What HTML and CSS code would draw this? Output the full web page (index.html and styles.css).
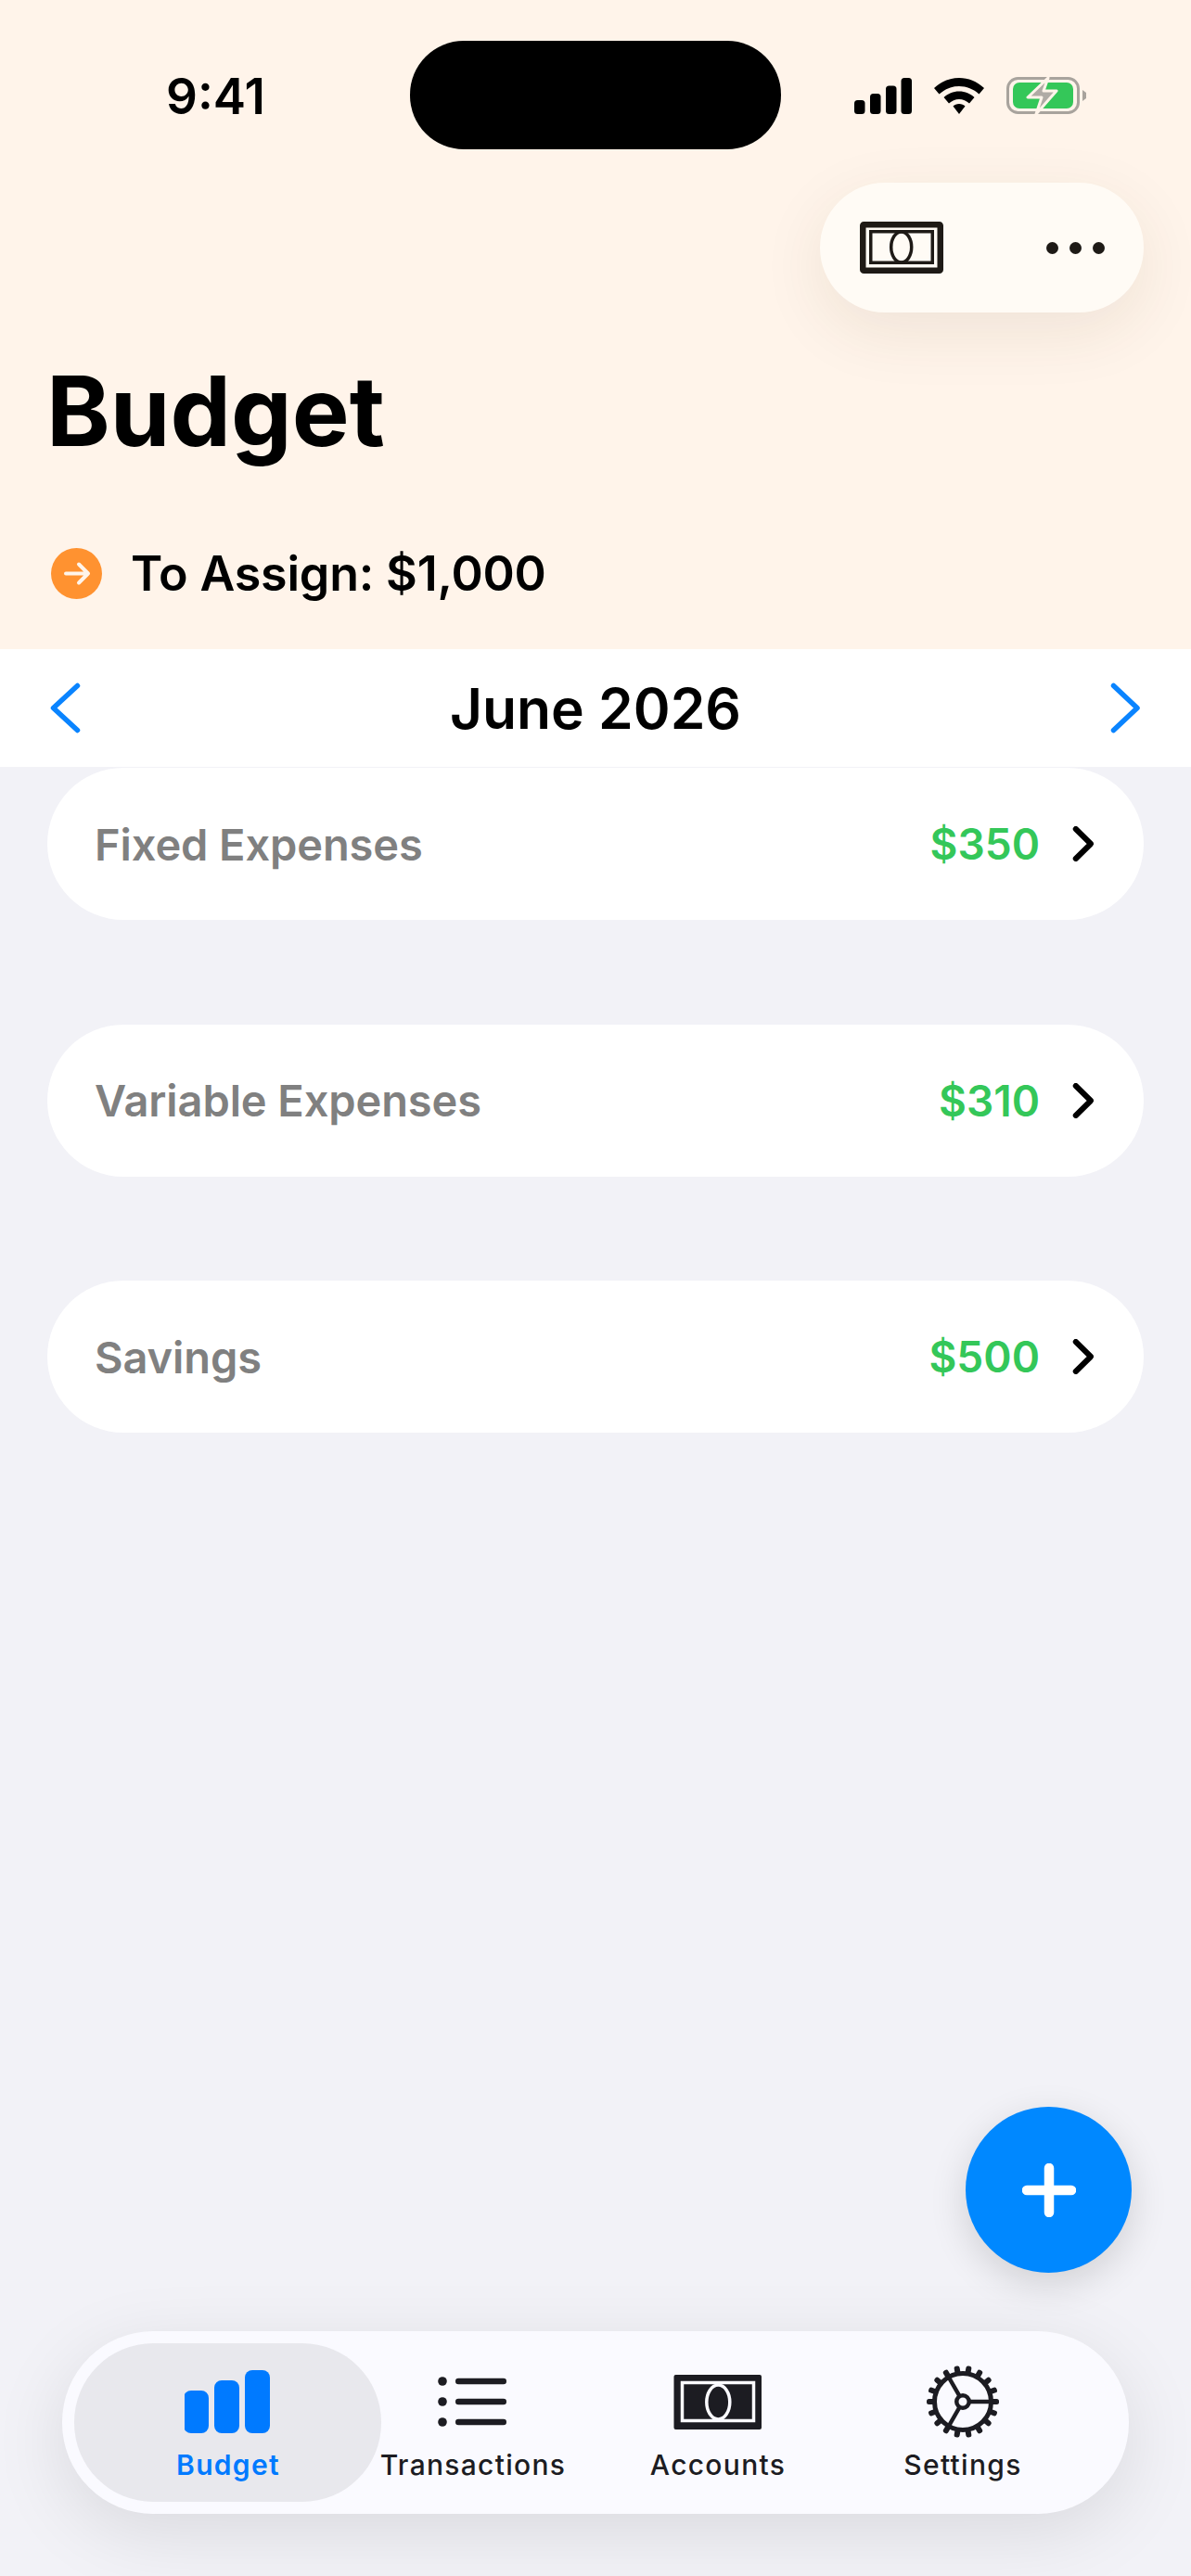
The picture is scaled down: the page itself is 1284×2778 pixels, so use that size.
FILE: index.html
```html
<!DOCTYPE html>
<html lang="en">
<head>
    <meta charset="UTF-8">
    <meta name="viewport" content="width=device-width, initial-scale=1.0">
    <title>Budget</title>
    <link rel="stylesheet" href="styles.css">
</head>
<body>
    <div class="screen">
        <div class="island"></div>

        <header class="top">
            <div class="status-bar">
                <span class="time">9:41</span>
                <div class="status-icons">
                    <svg class="signal" width="62" height="39" viewBox="0 0 62 39">
                        <rect x="0" y="24" width="11.5" height="15" rx="3.5"/>
                        <rect x="17" y="17" width="11.5" height="22" rx="3.5"/>
                        <rect x="34" y="8.5" width="11.5" height="30.5" rx="3.5"/>
                        <rect x="50.5" y="0" width="11.5" height="39" rx="3.5"/>
                    </svg>
                    <svg class="wifi" width="54" height="39" viewBox="0 0 54 39">
                        <path d="M27 0C17 0 8 3.800 0 11L5.500 17.500C11.500 12 19 9 27 9C35 9 42.500 12 48.500 17.500L54 11C46 3.800 37 0 27 0Z"/>
                        <path d="M27 14.500C20.500 14.500 15 17 10.500 21L16 27.500C19 24.800 23 23 27 23C31 23 35 24.800 38 27.500L43.500 21C39 17 33.500 14.500 27 14.500Z"/>
                        <path d="M27 28C24.300 28 22 29 20.500 30.500L27 39L33.500 30.500C32 29 29.700 28 27 28Z"/>
                    </svg>
                    <svg class="battery" width="86" height="42" viewBox="0 0 86 42">
                        <rect x="1.500" y="1.500" width="76" height="37" rx="11" fill="none" stroke="#a8a39d" stroke-width="3"/>
                        <rect x="7" y="6" width="65" height="28" rx="7" fill="#34c759"/>
                        <path d="M45 1L23 22H38L32 40L54 15H40Z" fill="#b0aba5" stroke="#fff4ea" stroke-width="3" stroke-linejoin="round"/>
                        <path d="M82 14L86 17V23L82 26Z" fill="#a8a39d"/>
                    </svg>
                </div>
            </div>

            <div class="toolbar-row">
                <div class="toolbar">
                    <svg width="90" height="56" viewBox="0 0 90 56">
                        <rect x="3.250" y="3.250" width="83.500" height="49.500" rx="1" fill="none" stroke="#1e1a16" stroke-width="6.500"/>
                        <rect x="11.750" y="10.750" width="66.500" height="33.500" fill="none" stroke="#1e1a16" stroke-width="3.500"/>
                        <ellipse cx="44.700" cy="27.500" rx="11" ry="16.500" fill="none" stroke="#1e1a16" stroke-width="3.500"/>
                    </svg>
                    <div class="more-dots"><i></i><i></i><i></i></div>
                </div>
            </div>

            <h1 class="page-title">Budget</h1>

            <div class="assign">
                <svg width="55" height="55" viewBox="0 0 55 55">
                    <circle cx="27.500" cy="27.500" r="27.500" fill="#ff9230"/>
                    <path d="M16 27.500H40M30 17.500L40 27.500L30 37.500" fill="none" stroke="#fff" stroke-opacity="0.9" stroke-width="4" stroke-linecap="round" stroke-linejoin="round"/>
                </svg>
                <span>To Assign: $1,000</span>
            </div>
        </header>

        <div class="month-bar">
            <svg width="36" height="56" viewBox="0 0 36 56"><path d="M32.500 3.500L6.500 27.500L32.500 51.500" class="nav-arrow"/></svg>
            <span class="month-name">June 2026</span>
            <svg width="36" height="56" viewBox="0 0 36 56"><path d="M6.500 3.500L32 27.500L6.500 51.500" class="nav-arrow"/></svg>
        </div>

        <main class="groups">
            <div class="group-card">
                <span class="group-name">Fixed Expenses</span>
                <span class="group-amount">$350</span>
                <svg class="chevron" width="24" height="38" viewBox="0 0 24 38"><path d="M4.750 3L21 19L4.750 35"/></svg>
            </div>
            <div class="group-card">
                <span class="group-name">Variable Expenses</span>
                <span class="group-amount">$310</span>
                <svg class="chevron" width="24" height="38" viewBox="0 0 24 38"><path d="M4.750 3L21 19L4.750 35"/></svg>
            </div>
            <div class="group-card">
                <span class="group-name">Savings</span>
                <span class="group-amount">$500</span>
                <svg class="chevron" width="24" height="38" viewBox="0 0 24 38"><path d="M4.750 3L21 19L4.750 35"/></svg>
            </div>
        </main>

        <button class="fab">
            <svg width="58" height="58" viewBox="0 0 58 58"><path d="M29 5V53M5 29H53" fill="none" stroke="#fff" stroke-width="10.500" stroke-linecap="round"/></svg>
        </button>

        <nav class="tab-bar">
            <div class="tab tab-active">
                <svg width="94" height="70" viewBox="1 0 94 70" fill="#007aff">
                    <rect x="0" y="24" width="27" height="46" rx="8"/>
                    <rect x="33" y="13" width="27" height="57" rx="8"/>
                    <rect x="66" y="2" width="27" height="68" rx="8"/>
                </svg>
                <span>Budget</span>
            </div>
            <div class="tab">
                <svg width="78" height="70" viewBox="0 0 78 70" fill="#1c1c22">
                    <circle cx="6" cy="14" r="4.800"/>
                    <circle cx="6" cy="36" r="4.800"/>
                    <circle cx="6" cy="58" r="4.800"/>
                    <rect x="20" y="10.750" width="55" height="6.500" rx="3.250"/>
                    <rect x="20" y="32.750" width="55" height="6.500" rx="3.250"/>
                    <rect x="20" y="54.750" width="55" height="6.500" rx="3.250"/>
                </svg>
                <span>Transactions</span>
            </div>
            <div class="tab">
                <svg width="96" height="70" viewBox="0 0 96 70">
                    <rect x="0.500" y="7" width="94.500" height="59" rx="2" fill="#1c1c22"/>
                    <rect x="9.500" y="15.500" width="77" height="41" fill="none" stroke="#fafaff" stroke-width="3.500"/>
                    <ellipse cx="48.300" cy="36.500" rx="12.500" ry="18.500" fill="none" stroke="#fafaff" stroke-width="3.500"/>
                </svg>
                <span>Accounts</span>
            </div>
            <div class="tab">
                <svg width="80" height="80" viewBox="-40 -40 80 80" class="gear">
                    <g fill="#1c1c22">
                        <rect x="-3" y="-39" width="6" height="10" rx="2.500" transform="rotate(10)"/>
                        <rect x="-3" y="-39" width="6" height="10" rx="2.500" transform="rotate(30)"/>
                        <rect x="-3" y="-39" width="6" height="10" rx="2.500" transform="rotate(50)"/>
                        <rect x="-3" y="-39" width="6" height="10" rx="2.500" transform="rotate(70)"/>
                        <rect x="-3" y="-39" width="6" height="10" rx="2.500" transform="rotate(90)"/>
                        <rect x="-3" y="-39" width="6" height="10" rx="2.500" transform="rotate(110)"/>
                        <rect x="-3" y="-39" width="6" height="10" rx="2.500" transform="rotate(130)"/>
                        <rect x="-3" y="-39" width="6" height="10" rx="2.500" transform="rotate(150)"/>
                        <rect x="-3" y="-39" width="6" height="10" rx="2.500" transform="rotate(170)"/>
                        <rect x="-3" y="-39" width="6" height="10" rx="2.500" transform="rotate(190)"/>
                        <rect x="-3" y="-39" width="6" height="10" rx="2.500" transform="rotate(210)"/>
                        <rect x="-3" y="-39" width="6" height="10" rx="2.500" transform="rotate(230)"/>
                        <rect x="-3" y="-39" width="6" height="10" rx="2.500" transform="rotate(250)"/>
                        <rect x="-3" y="-39" width="6" height="10" rx="2.500" transform="rotate(270)"/>
                        <rect x="-3" y="-39" width="6" height="10" rx="2.500" transform="rotate(290)"/>
                        <rect x="-3" y="-39" width="6" height="10" rx="2.500" transform="rotate(310)"/>
                        <rect x="-3" y="-39" width="6" height="10" rx="2.500" transform="rotate(330)"/>
                        <rect x="-3" y="-39" width="6" height="10" rx="2.500" transform="rotate(350)"/>
                    </g>
                    <circle r="30.500" fill="none" stroke="#1c1c22" stroke-width="5"/>
                    <path d="M7 0H30M-3.500 -6L-15 -26M-3.500 6L-15 26" fill="none" stroke="#1c1c22" stroke-width="4.500"/>
                    <circle r="6.750" fill="none" stroke="#1c1c22" stroke-width="4.500"/>
                </svg>
                <span>Settings</span>
            </div>
        </nav>
    </div>
</body>
</html>
```

FILE: styles.css
```css
* {
    margin: 0;
    padding: 0;
    box-sizing: border-box;
    font-family: Inter, 'Noto Sans', sans-serif;
}

body {
    background: #f2f2f7;
}

.screen {
    position: relative;
    width: 1284px;
    height: 2778px;
    overflow: hidden;
    background: #f2f2f7;
}

.island {
    position: absolute;
    top: 44px;
    left: 442px;
    width: 400px;
    height: 117px;
    background: #000;
    border-radius: 58px;
}

/* Header */
.top {
    height: 700px;
    background: #fff4ea;
    padding: 0 51px 0 55px;
}

.status-bar {
    display: flex;
    justify-content: space-between;
    height: 197px;
    padding: 84px 0 0 124px;
}

.time {
    margin-top: 1px;
    font-size: 53px;
    font-weight: 600;
    line-height: 39px;
    color: #000;
}

.status-icons {
    display: flex;
    align-items: flex-start;
    gap: 24px;
    margin-right: 62px;
}

.battery {
    margin-top: -1px;
}

.toolbar-row {
    display: flex;
    justify-content: flex-end;
}

.toolbar {
    display: flex;
    align-items: center;
    justify-content: space-between;
    width: 349px;
    height: 140px;
    padding: 0 42px 0 43px;
    background: #fffbf5;
    border-radius: 70px;
    box-shadow: 0 20px 70px rgba(80, 50, 20, 0.09);
}

.more-dots {
    display: flex;
    gap: 12px;
}

.more-dots i {
    width: 13px;
    height: 13px;
    border-radius: 50%;
    background: #1e1a16;
}

.page-title {
    margin: 43px 0 0 -5px;
    font-size: 104px;
    font-weight: 700;
    line-height: 126px;
    color: #000;
}

.assign {
    display: flex;
    align-items: center;
    gap: 31px;
    margin-top: 81px;
    font-size: 52px;
    font-weight: 600;
    letter-spacing: -0.2px;
    color: #000;
}

/* Month */
.month-bar {
    display: flex;
    align-items: center;
    justify-content: space-between;
    height: 127px;
    padding: 0 54px 0 51px;
    background: #fff;
}

.month-name {
    margin-left: 3px;
    font-size: 60.5px;
    font-weight: 600;
    color: #000;
}

.nav-arrow {
    fill: none;
    stroke: #0a84ff;
    stroke-width: 5.5;
    stroke-linecap: round;
    stroke-linejoin: round;
}

/* Cards */
.groups {
    display: flex;
    flex-direction: column;
    gap: 112.5px;
    padding: 1px 51px 0;
}

.group-card {
    display: flex;
    align-items: center;
    height: 164px;
    padding: 0 54px 0 51px;
    background: #fff;
    border-radius: 82px;
}

.group-name {
    flex: 1;
    font-size: 47px;
    font-weight: 600;
    letter-spacing: -0.1px;
    color: #808080;
}

.group-amount {
    margin-right: 34px;
    font-size: 46px;
    font-weight: 600;
    color: #34c759;
}

.chevron path {
    fill: none;
    stroke: #000;
    stroke-width: 6;
    stroke-linecap: round;
    stroke-linejoin: round;
}

/* Floating */
.fab {
    position: absolute;
    top: 2272px;
    left: 1041px;
    display: flex;
    align-items: center;
    justify-content: center;
    width: 179px;
    height: 179px;
    border: none;
    border-radius: 50%;
    background: #0088ff;
    box-shadow: 0 12px 40px rgba(0, 0, 0, 0.14);
}

.tab-bar {
    position: absolute;
    top: 2514px;
    left: 67px;
    z-index: 0;
    display: flex;
    width: 1150px;
    height: 197px;
    padding: 13px 0 13px 47px;
    background: #fafaff;
    border-radius: 98px;
    box-shadow: 0 20px 80px rgba(0, 0, 0, 0.1);
}

.tab {
    position: relative;
    display: flex;
    flex: 0 0 264px;
    flex-direction: column;
    align-items: center;
    justify-content: flex-end;
    padding-bottom: 22px;
    color: #1c1c22;
    font-size: 30px;
    font-weight: 500;
    letter-spacing: 1.3px;
    white-space: nowrap;
}

.tab svg {
    margin-bottom: 16px;
}

.tab-active {
    color: #007aff;
    font-weight: 600;
}

/* the highlight is wider than the tab cell */
.tab-active::before {
    content: "";
    position: absolute;
    top: 0;
    bottom: 0;
    left: -34px;
    right: -33px;
    z-index: -1;
    background: #e8e8ed;
    border-radius: 85px;
}

.tab .gear {
    margin-bottom: 10px;
}
```
